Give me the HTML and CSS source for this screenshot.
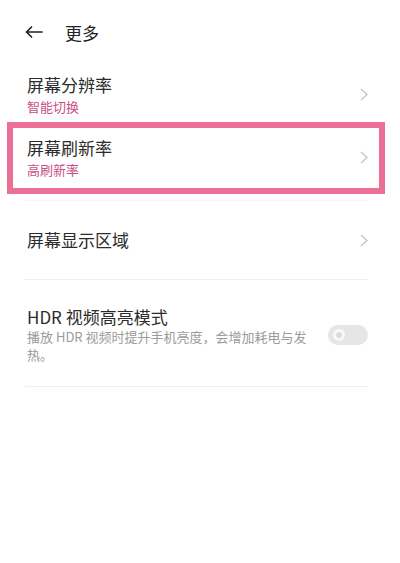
FILE: index.html
```html
<!DOCTYPE html>
<html lang="zh-CN">
<head>
  <meta charset="UTF-8" />
  <meta name="viewport" content="width=device-width, initial-scale=1.0"/>
  <title>更多</title>
  <link rel="stylesheet" href="styles.css">
</head>
<body>

  <!-- Top bar -->
  <div class="header">
    <svg class="back" width="18" height="12" viewBox="0 0 18 12">
      <path d="M17 6 H1.5 M6.5 1 L1.5 6 L6.5 11" fill="none" stroke="#222" stroke-width="1.7" stroke-linecap="round" stroke-linejoin="round"/>
    </svg>
    <span class="title">更多</span>
  </div>

  <!-- Settings list -->
  <div class="list">
    <div class="row first">
      <div class="text">
        <div class="name">屏幕分辨率</div>
        <div class="sub">智能切换</div>
      </div>
      <svg class="chevron" width="8" height="13" viewBox="0 0 8 13"><path d="M1 1 L7 6.5 L1 12" fill="none" stroke="#c4c4c4" stroke-width="1.3"/></svg>
    </div>

    <div class="row active">
      <div class="text">
        <div class="name">屏幕刷新率</div>
        <div class="sub">高刷新率</div>
      </div>
      <svg class="chevron" width="8" height="13" viewBox="0 0 8 13"><path d="M1 1 L7 6.5 L1 12" fill="none" stroke="#c4c4c4" stroke-width="1.3"/></svg>
    </div>

    <div class="divider faint"></div>

    <div class="row single">
      <div class="text">
        <div class="name">屏幕显示区域</div>
      </div>
      <svg class="chevron" width="8" height="13" viewBox="0 0 8 13"><path d="M1 1 L7 6.5 L1 12" fill="none" stroke="#c4c4c4" stroke-width="1.3"/></svg>
    </div>

    <div class="divider"></div>

    <div class="row hdr">
      <div class="text">
        <div class="name">HDR 视频高亮模式</div>
        <div class="desc">播放 HDR 视频时提升手机亮度，会增加耗电与发热。</div>
      </div>
      <div class="switch"><span class="knob"></span></div>
    </div>

    <div class="divider"></div>
  </div>

</body>
</html>
```

FILE: styles.css
```css
* { box-sizing: border-box; }
body {
  margin: 0;
  padding: 0;
  font-family: "Noto Sans CJK SC", "Noto Sans", sans-serif;
  background: #fff;
  color: #2b2b2b;
}

.header {
  height: 58px;
  padding: 6px 25px 0;
  display: flex;
  align-items: center;
  gap: 22px;
}

.header .title {
  font-size: 17px;
  color: #222;
}

.list {
  margin: 0 15px 0 7px;
}

.row {
  display: flex;
  align-items: center;
  border: 6px solid transparent;
  padding: 8px 11px 9px 14px;
}

.row.first {
  padding-top: 9px;
  padding-bottom: 0;
}

.row.active {
  border-color: #ec6f95;
}

.row.single {
  padding-top: 21px;
  padding-bottom: 21px;
}

.row.hdr {
  padding-top: 20px;
  padding-bottom: 16px;
  gap: 13px;
}

.text {
  flex: 1;
}

.name {
  font-size: 17px;
  line-height: 24px;
  color: #2b2b2b;
}

.sub {
  margin-top: 1px;
  font-size: 13px;
  line-height: 18px;
  color: #c94f82;
}

.hdr .name {
  line-height: 22px;
}

.desc {
  font-size: 13px;
  line-height: 18px;
  color: #9b9b9b;
}

.chevron {
  flex: none;
}

.divider {
  height: 1px;
  margin: 0 17px 0 18px;
  background: #efefef;
}

.divider.faint {
  margin-top: 6px;
  background: #f7f4f5;
}

.switch {
  flex: none;
  width: 40px;
  height: 20px;
  border-radius: 10px;
  background: #e6e6e6;
  display: flex;
  align-items: center;
  padding-left: 5px;
}

.knob {
  width: 12px;
  height: 12px;
  border-radius: 50%;
  border: 3px solid #f8f8f8;
  background: #dcdcdc;
}
```
